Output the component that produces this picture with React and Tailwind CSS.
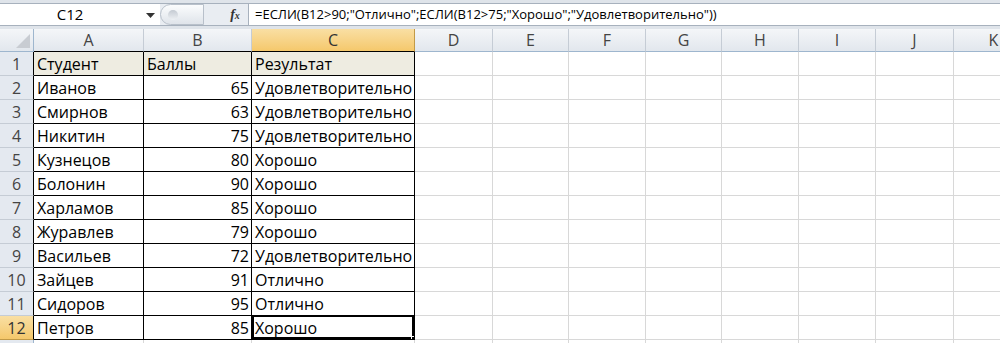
import React from "react";

const cols = [
  { k: "A", w: 110 },
  { k: "B", w: 108 },
  { k: "C", w: 163 },
  { k: "D", w: 78 },
  { k: "E", w: 76 },
  { k: "F", w: 77 },
  { k: "G", w: 76 },
  { k: "H", w: 77 },
  { k: "I", w: 77 },
  { k: "J", w: 78 },
  { k: "K", w: 80 },
];

const data = [
  ["Студент", "Баллы", "Результат"],
  ["Иванов", "65", "Удовлетворительно"],
  ["Смирнов", "63", "Удовлетворительно"],
  ["Никитин", "75", "Удовлетворительно"],
  ["Кузнецов", "80", "Хорошо"],
  ["Болонин", "90", "Хорошо"],
  ["Харламов", "85", "Хорошо"],
  ["Журавлев", "79", "Хорошо"],
  ["Васильев", "72", "Удовлетворительно"],
  ["Зайцев", "91", "Отлично"],
  ["Сидоров", "95", "Отлично"],
  ["Петров", "85", "Хорошо"],
];

const font = { fontFamily: '"Open Sans", "Liberation Sans", sans-serif' };

export default function App() {
  return (
    <div className="w-[1000px] h-[343px] overflow-hidden bg-[#dfe4ea]" style={font}>
      {/* formula bar */}
      <div className="h-[29px] pt-[3px] flex">
        <div className="h-[23px] w-[160px] bg-white border-y border-[#a7b1bd] flex items-center relative">
          <span className="w-[140px] text-center text-[15px] text-black">C12</span>
          <svg width="9" height="6" className="absolute left-[146px] top-[9px]">
            <path d="M0 0 L9 0 L4.5 5 Z" fill="#333" />
          </svg>
        </div>
        <div className="h-[23px] w-[62px] bg-[#e9edf2] border-y border-[#a7b1bd] flex items-center">
          <div className="w-[44px] h-[21px] rounded-l-full border border-[#b8c0ca] bg-gradient-to-b from-[#fbfcfd] to-[#dfe4ea] flex items-center pl-[7px]">
            <div className="w-[10px] h-[10px] rounded-full bg-gradient-to-b from-[#c4cad2] to-[#eef1f4]"></div>
          </div>
        </div>
        <div className="h-[23px] w-[26px] bg-[#e9edf2] border-y border-[#a7b1bd] flex items-center justify-center">
          <span className="text-[14px] italic font-bold text-[#333]" style={{ fontFamily: '"Liberation Serif", serif' }}>
            f<span className="text-[10px]">x</span>
          </span>
        </div>
        <div className="h-[23px] flex-1 bg-white border border-r-0 border-[#a7b1bd] flex items-center pl-[6px]">
          <span className="text-[13px] text-black whitespace-nowrap">
            =ЕСЛИ(B12&gt;90;"Отлично";ЕСЛИ(B12&gt;75;"Хорошо";"Удовлетворительно"))
          </span>
        </div>
      </div>

      {/* header row */}
      <div className="flex h-[23px]">
        <div className="w-[34px] h-full bg-gradient-to-b from-[#f4f6f8] to-[#e2e7ed] border-r border-b border-[#9eb6ce] relative shrink-0">
          <svg width="14" height="14" className="absolute right-[3px] bottom-[3px]">
            <path d="M14 0 L14 14 L0 14 Z" fill="#c8ccd2" />
          </svg>
        </div>
        {cols.map((c, i) => (
          <div
            key={c.k}
            className={
              "h-full shrink-0 flex items-center justify-center text-[16px] border-r " +
              (c.k === "C"
                ? "bg-gradient-to-b from-[#f9dfa3] to-[#f5c86b] border-[#c29a47] text-[#333] border-b-black border-b "
                : "bg-gradient-to-b from-[#f4f6f8] to-[#e2e7ed] border-[#c5ccd5] text-[#444] border-b " +
                  (i < 3 ? "border-b-black" : "border-b-[#9eb6ce]"))
            }
            style={{ width: c.w }}
          >
            {c.k}
          </div>
        ))}
      </div>

      {/* data rows */}
      {Array.from({ length: 13 }).map((_, r) => {
        const row = data[r];
        const sel = r === 11;
        return (
          <div key={r} className="flex h-[24px]">
            <div
              className={
                "w-[34px] h-full shrink-0 flex items-center justify-center text-[16px] border-r border-b " +
                (sel
                  ? "bg-gradient-to-b from-[#f9dfa3] to-[#f5c86b] text-[#333] border-b-[#c29a47] border-r-black"
                  : "bg-[#e4e9f0] text-[#444] border-b-[#c5ccd5] " + (row ? "border-r-black" : "border-r-[#9eb6ce]"))
              }
            >
              {row ? r + 1 : ""}
            </div>
            {cols.map((c, i) => {
              const inTable = row && i < 3;
              const isSel = sel && i === 2;
              let cls = "h-full shrink-0 flex items-center text-[16px] text-black whitespace-nowrap overflow-hidden relative ";
              if (inTable) {
                cls += "border-r border-b border-black ";
                if (r === 0) cls += "bg-[#eeece1] ";
                else cls += "bg-white ";
              } else {
                cls += "bg-white border-r border-b border-[#d8d8d8] ";
              }
              cls += i === 1 && r > 0 ? "justify-end pr-[2px] " : "pl-[3px] ";
              return (
                <div key={c.k} className={cls} style={{ width: c.w }}>
                  {inTable ? row[i] : ""}
                  {isSel && (
                    <>
                      <div className="absolute inset-0 -top-px border-2 border-black pointer-events-none"></div>
                      <div className="absolute right-[-3px] bottom-[-3px] w-[6px] h-[6px] bg-black border border-white"></div>
                    </>
                  )}
                </div>
              );
            })}
          </div>
        );
      })}
    </div>
  );
}
